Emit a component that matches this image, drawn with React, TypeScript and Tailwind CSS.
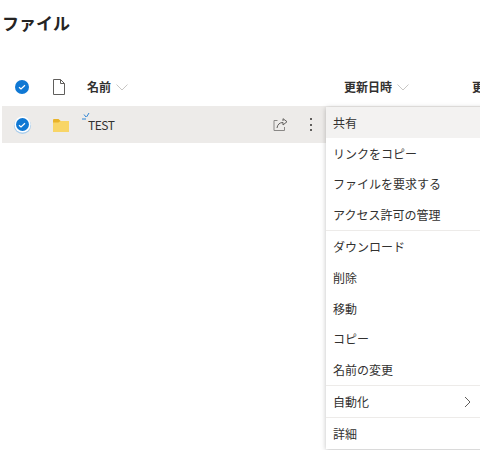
import React from "react";

const font = { fontFamily: '"Noto Sans CJK JP", "Noto Sans", sans-serif' };

const CheckCircle: React.FC<{ ring?: boolean }> = ({ ring }) => (
    <span className={ring ? "relative flex h-[13px] w-[13px] items-center justify-center rounded-full bg-[#0f78d4] shadow-[0_0_0_1.5px_#ffffff,0_1px_0_2px_#a9cdec]" : "flex h-[14px] w-[14px] items-center justify-center rounded-full bg-[#0f78d4]"}>
        <svg width="8" height="8" viewBox="0 0 8 8" fill="none" stroke="#ffffff" strokeWidth="1.2">
            <path d="M1 4.2 L3 6 L7 2.2" />
        </svg>
    </span>
);

const Chevron: React.FC = () => (
    <svg width="12" height="7" viewBox="0 0 12 7" fill="none" stroke="#c8c6c4" strokeWidth="1">
        <path d="M0.5 0.5 L6 6 L11.5 0.5" />
    </svg>
);

const MenuItem: React.FC<{ label: string; active?: boolean; sub?: boolean }> = ({ label, active, sub }) => (
    <div className={`flex h-[30.8px] items-center justify-between pl-[7px] pr-[55px] pt-[1px] text-[12px] text-[#323130] ${active ? "bg-[#f3f2f1]" : ""}`}>
        <span>{label}</span>
        {sub && (
            <svg width="7" height="12" viewBox="0 0 7 12" fill="none" stroke="#605e5c" strokeWidth="1">
                <path d="M1 1 L6 6 L1 11" />
            </svg>
        )}
    </div>
);

export default function App() {
    return (
        <div className="relative h-[450px] w-[480px] overflow-hidden bg-white" style={font}>
            <h1 className="pl-[2px] pt-[9px] text-[17px] leading-[28px] font-bold text-[#252423]">ファイル</h1>

            {/* column headers */}
            <div className="mt-[36px] flex h-[28px] items-center text-[12px] font-bold text-[#323130]">
                <div className="flex w-[44px] shrink-0 justify-center">
                    <CheckCircle />
                </div>
                <svg width="14" height="16" viewBox="0 0 14 16" fill="none" stroke="#605e5c" strokeWidth="1" className="ml-[8px] -mt-[1px] shrink-0">
                    <path d="M1.5 0.5 H8.5 L12.5 4.5 V15.5 H1.5 Z M8.5 0.5 V4.5 H12.5" />
                </svg>
                <div className="ml-[21px] flex w-[257px] shrink-0 items-center gap-[5px]">
                    名前
                    <Chevron />
                </div>
                <div className="flex w-[128px] shrink-0 items-center gap-[5px]">
                    更新日時
                    <Chevron />
                </div>
                <span className="shrink-0">更新者</span>
            </div>

            {/* selected row */}
            <div className="mt-[5px] ml-[2px] flex h-[37px] items-center bg-[#edebe9] text-[12px] text-[#323130]">
                <div className="flex w-[40px] shrink-0 justify-center">
                    <CheckCircle ring />
                </div>
                <svg width="16" height="13" viewBox="0 0 18 13" preserveAspectRatio="none" className="ml-[11px] mt-[1px] shrink-0">
                    <path d="M0 1.5 C0 0.7 0.6 0 1.5 0 H6 L8.5 2 H18 V13 H0 Z" fill="#f8d567" />
                    <path d="M0 1.5 C0 0.7 0.6 0 1.5 0 H6 L8.5 2 L6 3.5 H0 Z" fill="#e9b32a" />
                </svg>
                <div className="relative ml-[19px] w-[185px] shrink-0 tracking-[-0.5px]">
                    <svg width="8" height="8" viewBox="0 0 8 8" fill="none" stroke="#2f86d6" strokeWidth="1" className="absolute -left-[6px] -top-[4px]">
                        <path d="M7 1 L4.5 5 M2 2.5 L4 5 M0 7 H4" />
                    </svg>
                    TEST
                </div>
                <svg width="15" height="14" viewBox="0 0 15 14" fill="none" stroke="#605e5c" strokeWidth="1" className="shrink-0">
                    <path d="M4.5 2.5 H1 V12.5 H11.5 V9" stroke="#8a8886" />
                    <path d="M4 10 C4.5 6.5 6.5 4.5 10 4.5 V7 L14 3.7 L10 0.7 V3" />
                </svg>
                <div className="ml-[22px] flex flex-col gap-[3.5px]">
                    <span className="h-[2px] w-[2px] bg-[#605e5c]" />
                    <span className="h-[2px] w-[2px] bg-[#605e5c]" />
                    <span className="h-[2px] w-[2px] bg-[#605e5c]" />
                </div>
            </div>

            {/* context menu */}
            <div className="absolute left-[326px] top-[107px] w-[200px] bg-white shadow-[0_1px_5px_rgba(0,0,0,0.25)]">
                <MenuItem label="共有" active />
                <MenuItem label="リンクをコピー" />
                <MenuItem label="ファイルを要求する" />
                <MenuItem label="アクセス許可の管理" />
                <div className="h-px bg-[#edebe9]" />
                <MenuItem label="ダウンロード" />
                <MenuItem label="削除" />
                <MenuItem label="移動" />
                <MenuItem label="コピー" />
                <MenuItem label="名前の変更" />
                <div className="h-px bg-[#edebe9]" />
                <MenuItem label="自動化" sub />
                <div className="h-px bg-[#edebe9]" />
                <MenuItem label="詳細" />
            </div>
        </div>
    );
}
